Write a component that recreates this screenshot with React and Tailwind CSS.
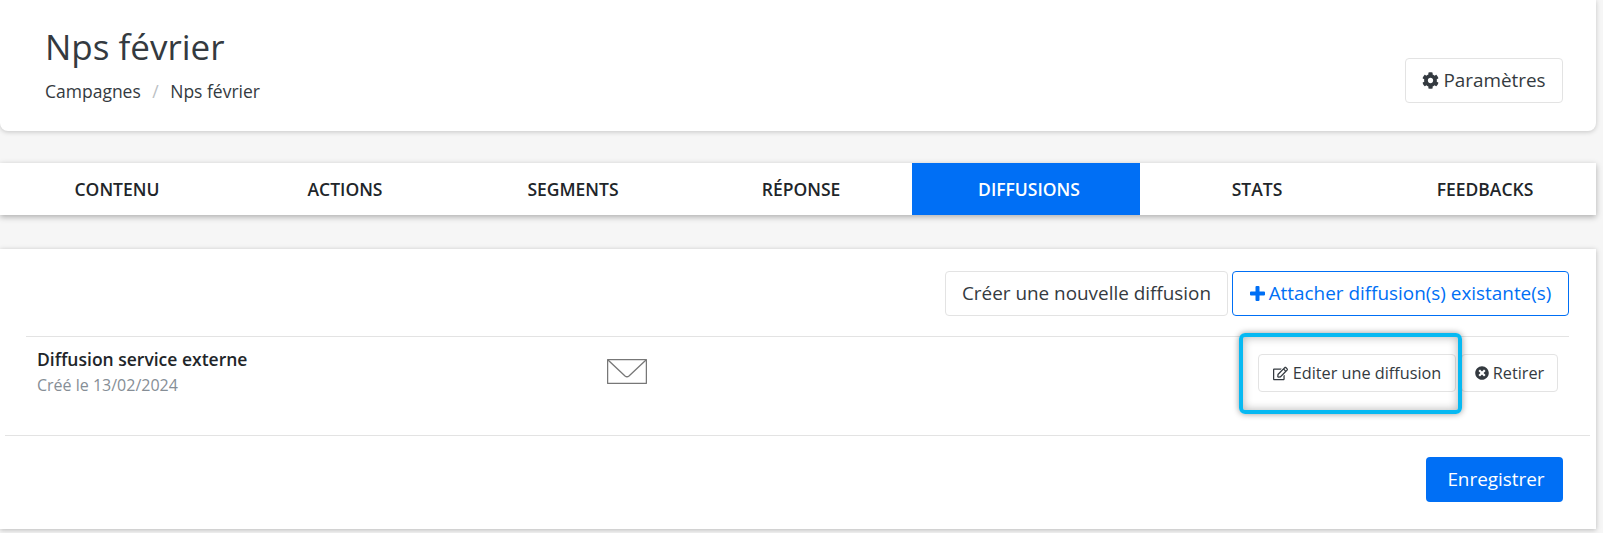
import { FaCog, FaRegEdit, FaTimesCircle } from "react-icons/fa";

const tabs = ["CONTENU", "ACTIONS", "SEGMENTS", "RÉPONSE", "DIFFUSIONS", "STATS", "FEEDBACKS"];

const Envelope = () => (
  <svg width="40" height="25" viewBox="0 0 40 25" fill="none" stroke="#777">
    <rect x="0.5" y="0.5" width="39" height="24" rx="1" strokeWidth="1.5" />
    <path d="M1 1 L18 17 Q20 18.5 22 17 L39 1" strokeWidth="1.3" />
  </svg>
);

const Plus = () => (
  <svg width="15" height="15" viewBox="0 0 15 15" fill="currentColor">
    <path d="M5.5 1 Q5.5 0 6.5 0 H8.5 Q9.5 0 9.5 1 V5.5 H14 Q15 5.5 15 6.5 V8.5 Q15 9.5 14 9.5 H9.5 V14 Q9.5 15 8.5 15 H6.5 Q5.5 15 5.5 14 V9.5 H1 Q0 9.5 0 8.5 V6.5 Q0 5.5 1 5.5 H5.5 Z" />
  </svg>
);

export default function App() {
  return (
    <div className="h-[533px] w-[1603px] overflow-hidden bg-[#f6f6f6] pr-[7px] font-['Open_Sans',sans-serif] text-[#343a40]">
      {/* HEADER */}
      <div className="flex h-[131px] items-start justify-between rounded-b-lg bg-white pl-[45px] pr-[33px] shadow-[0_1px_5px_rgba(0,0,0,0.2)]">
        <div className="pt-[22px]">
          <h1 className="text-[35px] leading-[50px]">Nps février</h1>
          <div className="mt-[7px] flex text-[17.5px] leading-[24px]">
            <span>Campagnes</span>
            <span className="px-[11.5px] text-[#bbbfc4]">/</span>
            <span>Nps février</span>
          </div>
        </div>
        <button className="mt-[58px] flex h-[45px] w-[158px] items-center justify-center gap-[4px] rounded border border-[#e3e3e3] bg-white text-[18.9px]">
          <FaCog className="text-[17px]" />
          <span>Paramètres</span>
        </button>
      </div>

      {/* TABS */}
      <div className="mt-[32px] grid h-[52px] grid-cols-7 bg-white shadow-[0_2px_6px_rgba(0,0,0,0.3)]">
        {tabs.map((tab) => (
          <div
            key={tab}
            className={`flex items-center justify-center pl-[6px] text-[17.5px] font-semibold ${
              tab === "DIFFUSIONS" ? "bg-[#006ff5] text-white" : "text-[#212529]"
            }`}
          >
            {tab}
          </div>
        ))}
      </div>

      {/* CARD */}
      <div className="mt-[34px] h-[280px] bg-white pt-[22px] shadow-[0_1px_5px_rgba(0,0,0,0.25)]">
        <div className="flex justify-end gap-1 pr-[27px]">
          <button className="h-[45px] w-[283px] rounded border border-[#e3e3e3] bg-white text-[18.9px]">
            Créer une nouvelle diffusion
          </button>
          <button className="flex h-[45px] w-[337px] items-center justify-center gap-[4px] rounded border border-[#006ff5] bg-white text-[18.9px] text-[#006ff5]">
            <Plus />
            <span>Attacher diffusion(s) existante(s)</span>
          </button>
        </div>

        <div className="ml-[26px] mr-[27px] mt-[20px] flex h-[99px] border-t border-[#e3e3e3] pl-[11px]">
          <div className="w-[570px] pt-[9px]">
            <div className="text-[17.5px] font-semibold leading-[26px] text-[#212529]">Diffusion service externe</div>
            <div className="mt-[2px] text-base leading-[22px] text-[#868e96]">Créé le 13/02/2024</div>
          </div>
          <div className="pt-[22px]">
            <Envelope />
          </div>
          <div className="relative ml-auto mr-[11px] mt-[17px] flex h-[38px] gap-[5px] text-[16.25px]">
            <button className="flex w-[198px] items-center justify-center gap-[5px] rounded border border-[#e3e3e3] bg-white">
              <FaRegEdit className="text-[15px]" />
              <span>Editer une diffusion</span>
            </button>
            <button className="flex w-[97px] items-center justify-center gap-[4px] rounded border border-[#e3e3e3] bg-white">
              <FaTimesCircle className="text-[14px]" />
              <span>Retirer</span>
            </button>
            {/* highlight annotation */}
            <div className="absolute left-[-19px] top-[-21px] h-[81px] w-[223px] rounded-md border-4 border-[#07b9f2] shadow-[0_0_6px_rgba(0,0,0,0.4),inset_0_0_10px_rgba(0,0,0,0.3)]" />
          </div>
        </div>

        <div className="ml-[5px] mr-[6px] flex justify-end border-t border-[#e3e3e3] pr-[27px] pt-[21px]">
          <button className="h-[45px] w-[137px] rounded bg-[#006ff5] pl-[3px] text-[18.9px] text-white">Enregistrer</button>
        </div>
      </div>
    </div>
  );
}
